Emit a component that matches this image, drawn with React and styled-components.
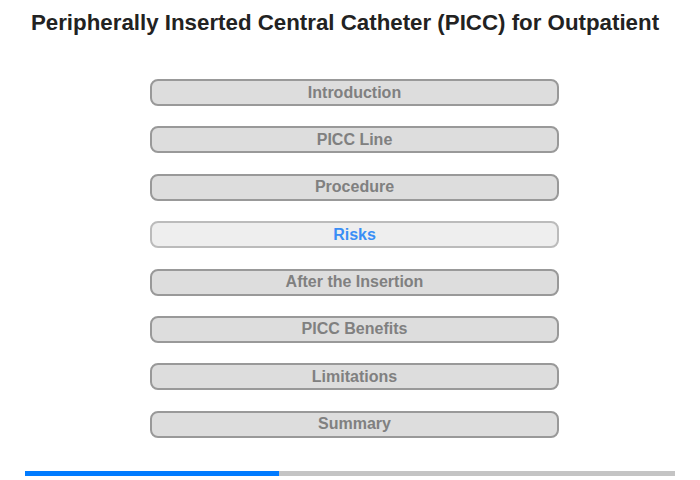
import styled, { createGlobalStyle } from "styled-components";

const GlobalStyle = createGlobalStyle`
  body {
    margin: 0;
    background: #fff;
    font-family: "Liberation Sans", Arial, sans-serif;
  }
`;

const items = [
  "Introduction",
  "PICC Line",
  "Procedure",
  "Risks",
  "After the Insertion",
  "PICC Benefits",
  "Limitations",
  "Summary",
];

export default function App() {
  const active = 3;
  const progress = 39;

  return (
    <Page>
      <GlobalStyle />
      <Title>Peripherally Inserted Central Catheter (PICC) for Outpatient</Title>
      <Menu>
        {items.map((label, i) => (
          <MenuButton key={label} $active={i === active}>
            {label}
          </MenuButton>
        ))}
      </Menu>
      <Progress>
        <ProgressFill style={{ width: `${progress}%` }} />
      </Progress>
    </Page>
  );
}

const Page = styled.div`
  width: 700px;
  height: 480px;
  display: flex;
  flex-direction: column;
  align-items: center;
`;

const Title = styled.h1`
  margin: 10px 10px 0 0;
  font-size: 22.3px;
  font-weight: bold;
  color: #222;
  line-height: 26px;
  white-space: nowrap;
`;

const Menu = styled.div`
  margin: 43px 0 0 9px;
  width: 409px;
  display: flex;
  flex-direction: column;
  gap: 20.4px;
`;

const MenuButton = styled.div`
  box-sizing: border-box;
  height: 27px;
  border: 2px solid ${(p) => (p.$active ? "#bbb" : "#999")};
  border-radius: 8px;
  background: ${(p) => (p.$active ? "#eee" : "#ddd")};
  color: ${(p) => (p.$active ? "#3a8ef6" : "#808080")};
  font-size: 16px;
  font-weight: bold;
  display: flex;
  align-items: center;
  justify-content: center;
  cursor: pointer;
`;

const Progress = styled.div`
  margin-top: auto;
  margin-bottom: 4px;
  width: 650px;
  height: 5px;
  background: #c4c4c4;
  display: flex;
`;

const ProgressFill = styled.div`
  height: 100%;
  background: #007bff;
`;
